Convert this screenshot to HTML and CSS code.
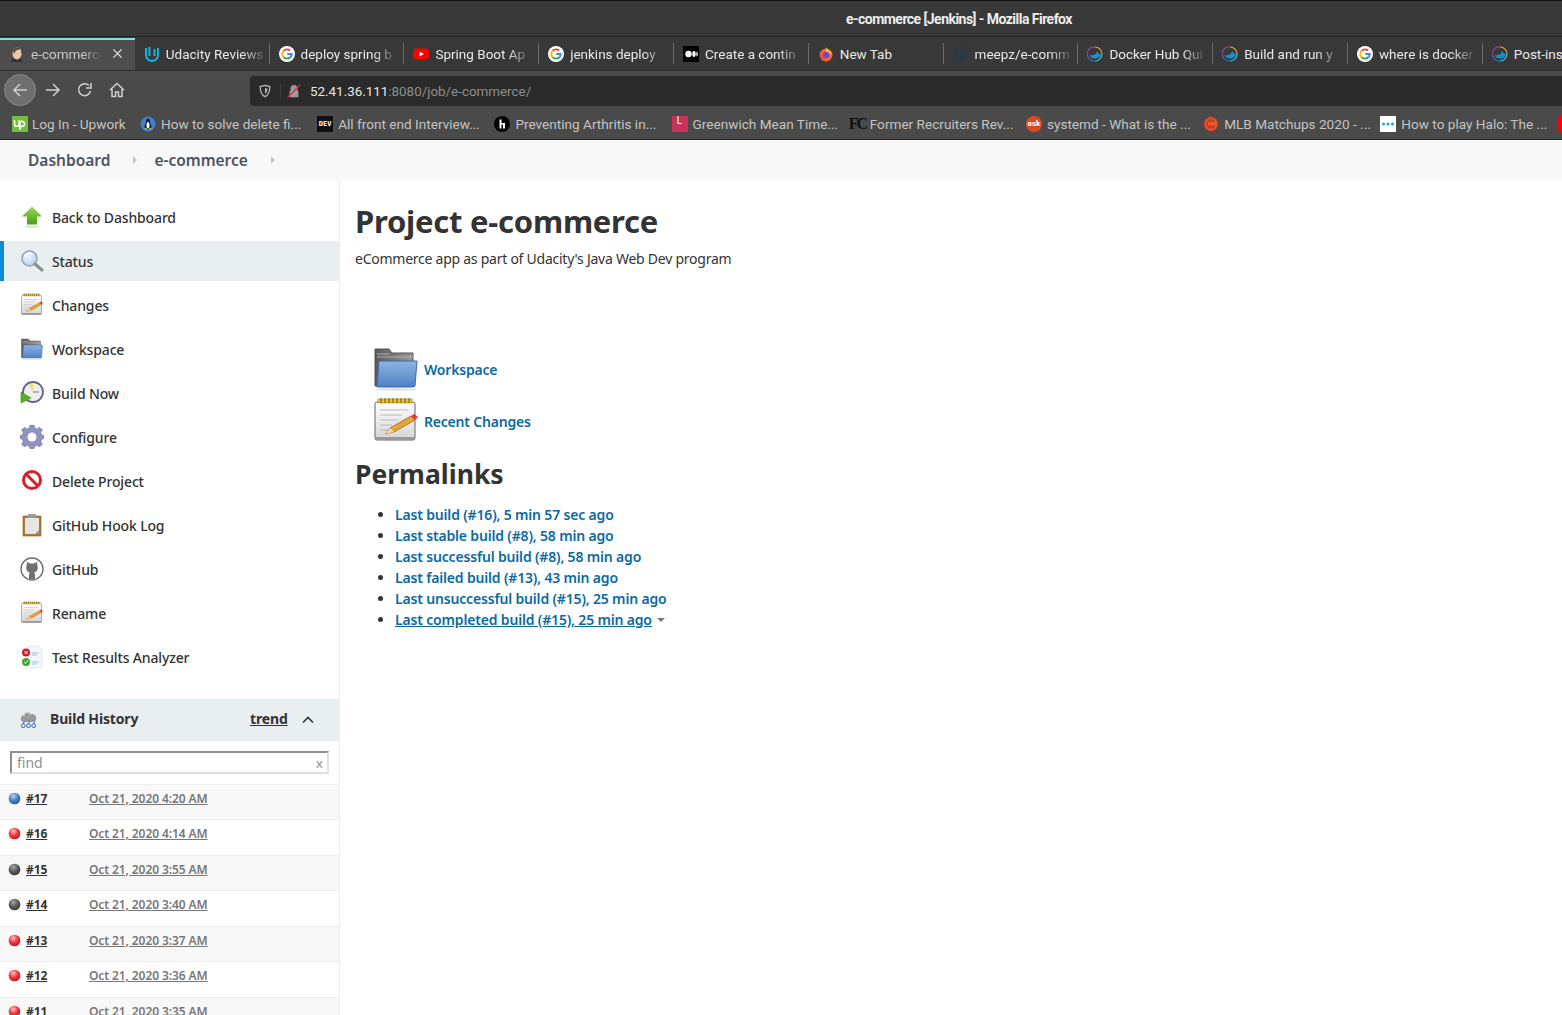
FILE: index.html
```html
<!DOCTYPE html>
<html lang="en">
<head>
    <meta charset="UTF-8">
    <title>e-commerce [Jenkins]</title>
    <link rel="stylesheet" href="styles.css">
</head>
<body>
    <!-- shared icons -->
    <svg class="defs" width="0" height="0">
        <defs>
            <linearGradient id="folderBlue" x1="0" y1="0" x2="0" y2="1"><stop offset="0" stop-color="#8db4e4"/><stop offset="1" stop-color="#4f82c4"/></linearGradient>
            <linearGradient id="folderGrey" x1="0" y1="0" x2="1" y2="0"><stop offset="0" stop-color="#5a5a5a"/><stop offset="1" stop-color="#9a9a9a"/></linearGradient>
            <linearGradient id="paper" x1="0" y1="0" x2="0" y2="1"><stop offset="0" stop-color="#ffffff"/><stop offset="1" stop-color="#d5d5d5"/></linearGradient>
            <linearGradient id="arrowGreen" x1="0" y1="0" x2="0" y2="1"><stop offset="0" stop-color="#9adb5c"/><stop offset="1" stop-color="#4c9e12"/></linearGradient>
            <radialGradient id="lens" cx=".4" cy=".35" r=".8"><stop offset="0" stop-color="#f0f6fd"/><stop offset="1" stop-color="#a9c8ec"/></radialGradient>
            <radialGradient id="ballBlue" cx=".4" cy=".3" r=".8"><stop offset="0" stop-color="#b5d3f5"/><stop offset=".5" stop-color="#4a80c4"/><stop offset="1" stop-color="#1f4f94"/></radialGradient>
            <radialGradient id="ballRed" cx=".4" cy=".3" r=".8"><stop offset="0" stop-color="#ffc0c0"/><stop offset=".5" stop-color="#f0333c"/><stop offset="1" stop-color="#b5101c"/></radialGradient>
            <radialGradient id="ballGrey" cx=".4" cy=".3" r=".8"><stop offset="0" stop-color="#a8a8a8"/><stop offset=".5" stop-color="#5a5a5a"/><stop offset="1" stop-color="#333"/></radialGradient>
            <symbol id="g-logo" viewBox="0 0 16 16">
                <circle cx="8" cy="8" r="8" fill="#fff"/>
                <path d="M11.2 4.6A4.7 4.7 0 0 0 4.6 4.9" fill="none" stroke="#ea4335" stroke-width="2"/>
                <path d="M4.6 4.9A4.7 4.7 0 0 0 4.6 11.1" fill="none" stroke="#fbbc05" stroke-width="2"/>
                <path d="M4.6 11.1A4.7 4.7 0 0 0 11.6 11" fill="none" stroke="#34a853" stroke-width="2"/>
                <path d="M11.6 11A4.7 4.7 0 0 0 12.7 8H8.2" fill="none" stroke="#4285f4" stroke-width="2"/>
            </symbol>
            <symbol id="docker" viewBox="0 0 16 16">
                <path d="M2 12.5A7 7 0 0 1 8 1" fill="none" stroke="#7a4fa0" stroke-width="1.2"/>
                <path d="M8 1A7 7 0 0 1 15 8" fill="none" stroke="#f0a23c" stroke-width="1.2"/>
                <path d="M15 8A7 7 0 0 1 8 15" fill="none" stroke="#3ec0d8" stroke-width="1.2"/>
                <path d="M8 15A7 7 0 0 1 2 12.5" fill="none" stroke="#2b6a9c" stroke-width="1.2"/>
                <path d="M2.5 9c2.5.6 5 0 6.5-1.5L10.500 5l1 2.500 2.500.5c-.6 2.800-3 4.500-5.500 4.500-3 0-5-1-6-3.500z" fill="#1a8fd0"/>
            </symbol>
            <symbol id="notepad" viewBox="0 0 48 48">
                <rect x="3" y="5" width="40" height="38" rx="2" fill="url(#paper)" stroke="#666"/>
                <rect x="4" y="40" width="38" height="3" fill="#999"/>
                <rect x="6" y="2" width="34" height="4" fill="#e3c53a" stroke="#a8891f" stroke-width=".6"/>
                <path d="M9 1v5M13 1v5M17 1v5M21 1v5M25 1v5M29 1v5M33 1v5M37 1v5" stroke="#6e5a10"/>
                <path d="M8 13h28M8 18h22M8 23h18M8 28h12M8 33h8" stroke="#bbb"/>
                <path d="M13 37l5-6 21-12 4 4-21 12z" fill="#e8a33a" stroke="#9c6714" stroke-width=".8"/>
                <path d="M13 37l5-6 4 4z" fill="#f3d9a8"/>
                <path d="M39 19l3-2 4 3-3 3z" fill="#e03a3a"/>
            </symbol>
            <symbol id="folder" viewBox="0 0 48 48">
                <path d="M3 4h14l3 4h21v33H3z" fill="url(#folderGrey)" stroke="#555"/>
                <path d="M5 12h36M5 9h12" stroke="#b0b0b0"/>
                <path d="M7 16h38l-2 25a2 2 0 0 1-2 1H5z" fill="url(#folderBlue)" stroke="#3b6ba8"/>
                <ellipse cx="24" cy="44.500" rx="21" ry="1.200" fill="#ddd"/>
            </symbol>
            <symbol id="ball-blue" viewBox="0 0 14 14"><circle cx="7" cy="7" r="6.300" fill="url(#ballBlue)"/></symbol>
            <symbol id="ball-red" viewBox="0 0 14 14"><circle cx="7" cy="7" r="6.300" fill="url(#ballRed)"/></symbol>
            <symbol id="ball-grey" viewBox="0 0 14 14"><circle cx="7" cy="7" r="6.300" fill="url(#ballGrey)"/></symbol>
        </defs>
    </svg>

    <div class="page">
        <div class="titlebar">e-commerce [Jenkins] - Mozilla Firefox</div>

        <div class="tabs">
            <div class="tab tab-active">
                <svg class="fav" viewBox="0 0 16 16"><path d="M4 5c0-4 7-5 8-1l.5 5-1.500 3 2 3H3l2-3-1.500-3z" fill="#ecc9a8"/><path d="M4 5c0-4 7-5 8-1-2-1-5 0-6 2l-.5 2z" fill="#5a4a42"/><path d="M2 16l2-4 4 1.500 4-1.500 2 4z" fill="#2f2f35"/><path d="M7 13h2.500l-1 2.500z" fill="#c0392b"/></svg>
                <span class="tab-label">e-commerce</span>
                <svg class="tab-close" viewBox="0 0 12 12"><path d="M1.500 1.500l9 9M10.500 1.500l-9 9" stroke="#e0e0e0" stroke-width="1.500"/></svg>
            </div>
            <div class="tab">
                <svg class="fav" viewBox="0 0 16 16"><path d="M2 2v7a6 6 0 0 0 12 0V2M5.500 1v9" fill="none" stroke="#16b2dc" stroke-width="2"/><path d="M10.500 3v7" stroke="#16b2dc" stroke-width="2"/></svg>
                <span class="tab-label">Udacity Reviews</span>
            </div>
            <div class="tab">
                <svg class="fav"><use href="#g-logo"/></svg>
                <span class="tab-label">deploy spring b</span>
            </div>
            <div class="tab">
                <svg class="fav" viewBox="0 0 16 16"><rect x="0" y="2.500" width="16" height="11" rx="3" fill="#f00"/><path d="M6.500 5.500v5l4.500-2.500z" fill="#fff"/></svg>
                <span class="tab-label">Spring Boot Ap</span>
            </div>
            <div class="tab">
                <svg class="fav"><use href="#g-logo"/></svg>
                <span class="tab-label">jenkins deploy</span>
            </div>
            <div class="tab">
                <svg class="fav" viewBox="0 0 16 16"><rect width="16" height="16" fill="#000"/><circle cx="5.500" cy="8" r="3.200" fill="#fff"/><ellipse cx="11" cy="8" rx="1.700" ry="3" fill="#fff"/><ellipse cx="14" cy="8" rx=".7" ry="2.600" fill="#fff"/></svg>
                <span class="tab-label">Create a contin</span>
            </div>
            <div class="tab">
                <svg class="fav" viewBox="0 0 16 16"><circle cx="8" cy="9" r="6.500" fill="#f2682a"/><path d="M8 1c1 3 5 3 6 8-1-1-3-2-6-2z" fill="#ffb52e"/><circle cx="8" cy="9" r="3.200" fill="#7b3fd0"/><path d="M2 5c0 3 1 7 6 9-4 0-7-3-6-9z" fill="#e22850"/></svg>
                <span class="tab-label tab-label-full">New Tab</span>
            </div>
            <div class="tab">
                <svg class="fav" viewBox="0 0 16 16"><circle cx="8" cy="8" r="7" fill="none" stroke="#243a4c" stroke-width="1.200"/><path d="M3 9c3 1 6 0 7-3l1 2 2 .5c-1 3-3 4-5 4-3 0-4-1-5-3.500z" fill="#1c3a52"/></svg>
                <span class="tab-label">meepz/e-comm</span>
            </div>
            <div class="tab">
                <svg class="fav"><use href="#docker"/></svg>
                <span class="tab-label">Docker Hub Qui</span>
            </div>
            <div class="tab">
                <svg class="fav"><use href="#docker"/></svg>
                <span class="tab-label">Build and run y</span>
            </div>
            <div class="tab">
                <svg class="fav"><use href="#g-logo"/></svg>
                <span class="tab-label">where is docker</span>
            </div>
            <div class="tab tab-last">
                <svg class="fav"><use href="#docker"/></svg>
                <span>Post-ins</span>
            </div>
        </div>

        <div class="navbar">
            <div class="nav-buttons">
                <div class="nav-back">
                    <svg viewBox="0 0 16 16"><path d="M15 8H2M8 2L2 8l6 6" fill="none" stroke="#cfcfcf" stroke-width="1.500"/></svg>
                </div>
                <svg class="nav-icon" viewBox="0 0 16 16"><path d="M1 8h13M8 2l6 6-6 6" fill="none" stroke="#cfcfcf" stroke-width="1.500"/></svg>
                <svg class="nav-icon" viewBox="0 0 16 16"><path d="M13.500 9A6 6 0 1 1 12 3.500" fill="none" stroke="#cfcfcf" stroke-width="1.500"/><path d="M14 1v5H9" fill="none" stroke="#cfcfcf" stroke-width="1.500"/></svg>
                <svg class="nav-icon" viewBox="0 0 16 16"><path d="M1 8l7-6.500L15 8M3 7v7.500h3.500V10h3v4.500H13V7" fill="none" stroke="#cfcfcf" stroke-width="1.500"/></svg>
            </div>
            <div class="urlbar">
                <svg class="url-shield" viewBox="0 0 16 16"><path d="M8 1.500l5.500 1.500c0 5-1 9-5.500 11.500C3.500 12 2.500 8 2.500 3z" fill="none" stroke="#b5b5b5" stroke-width="1.500"/><path d="M8 4.500v7c2-1.500 2.700-4 2.800-6z" fill="#b5b5b5"/></svg>
                <svg class="url-lock" viewBox="0 0 16 16"><path d="M4 8V5a4 4 0 0 1 8 0v3M3 8h10v7H3z" fill="#9a9a9a"/><path d="M1 15L15 1" stroke="#f0254a" stroke-width="1.600"/></svg>
                <span class="url-text"><span class="url-host">52.41.36.111</span>:8080/job/e-commerce/</span>
            </div>
        </div>

        <div class="bookmarks">
            <div class="bookmark bookmark-first">
                <svg class="fav" viewBox="0 0 16 16"><rect width="16" height="16" fill="#6fbf3a"/><path d="M2.500 4v4a2.300 2.300 0 0 0 4.600 0V4M7 7c1-2 5-2.500 5.500 .5S9 11.500 8 9M8 7v7" fill="none" stroke="#fff" stroke-width="1.600"/></svg>
                <span>Log In - Upwork</span>
            </div>
            <div class="bookmark">
                <svg class="fav" viewBox="0 0 16 16"><circle cx="8" cy="8" r="7.500" fill="#3f7fd0"/><path d="M8 2.500c2 0 2 2 2 4l2 5-3 1H7l-3-1 2-5c0-2 0-4 2-4z" fill="#222"/><path d="M8 6c1 0 1.500 2 1.500 4S8.500 12 8 12s-1.500 0-1.500-2S7 6 8 6z" fill="#fff"/><path d="M4 11.500l3 1-1 1.500zM12 11.500l-3 1 1 1.500z" fill="#f0b030"/></svg>
                <span>How to solve delete fi...</span>
            </div>
            <div class="bookmark">
                <span class="fav fav-dev">DEV</span>
                <span>All front end Interview...</span>
            </div>
            <div class="bookmark">
                <svg class="fav" viewBox="0 0 16 16"><circle cx="8" cy="8" r="8" fill="#000"/><path d="M5.500 3.500v9h2v-4h1.500v4h2V7H7.500V3.500z" fill="#fff"/></svg>
                <span>Preventing Arthritis in...</span>
            </div>
            <div class="bookmark">
                <span class="fav fav-l">L</span>
                <span>Greenwich Mean Time...</span>
            </div>
            <div class="bookmark">
                <span class="fav fav-fc">FC</span>
                <span>Former Recruiters Rev...</span>
            </div>
            <div class="bookmark">
                <span class="fav fav-ask">ask</span>
                <span>systemd - What is the ...</span>
            </div>
            <div class="bookmark">
                <svg class="fav" viewBox="0 0 16 16"><circle cx="8" cy="8" r="7.500" fill="#b5432a"/><circle cx="8" cy="8" r="5.500" fill="none" stroke="#e8552e" stroke-width="1.500"/><path d="M5 6h8v3.500H5z" fill="#f0552a"/></svg>
                <span>MLB Matchups 2020 - ...</span>
            </div>
            <div class="bookmark">
                <svg class="fav" viewBox="0 0 16 16"><rect width="16" height="16" fill="#fff"/><circle cx="3.500" cy="8" r="1.500" fill="#14a9e0"/><circle cx="8" cy="8" r="1.500" fill="#14a9e0"/><circle cx="12.500" cy="8" r="1.500" fill="#14a9e0"/></svg>
                <span>How to play Halo: The ...</span>
            </div>
            <div class="bookmark">
                <svg class="fav" viewBox="0 0 16 16"><rect width="16" height="16" rx="3" fill="#f00"/></svg>
            </div>
        </div>

        <div class="breadcrumb">
            <a class="crumb crumb-first">Dashboard</a>
            <span class="crumb-arrow"></span>
            <a class="crumb">e-commerce</a>
            <span class="crumb-arrow"></span>
        </div>

        <div class="content">
            <div class="side-panel">
                <div class="tasks">
                    <div class="task">
                        <svg class="task-icon" viewBox="0 0 24 24"><path d="M12 1.500l10 10h-5v8H7v-8H2z" fill="url(#arrowGreen)"/><ellipse cx="12" cy="21.500" rx="7" ry="1" fill="#ddd"/></svg>
                        <span>Back to Dashboard</span>
                    </div>
                    <div class="task task-active">
                        <svg class="task-icon" viewBox="0 0 24 24"><circle cx="9.500" cy="9.500" r="7.500" fill="url(#lens)" stroke="#9aa5b0" stroke-width="1.600"/><path d="M4.500 8a5 5 0 0 1 8-2.500" fill="none" stroke="#fff" stroke-width="1.500"/><path d="M15 15l7 6" stroke="#8c8c8c" stroke-width="3" stroke-linecap="round"/></svg>
                        <span>Status</span>
                    </div>
                    <div class="task">
                        <svg class="task-icon"><use href="#notepad"/></svg>
                        <span>Changes</span>
                    </div>
                    <div class="task">
                        <svg class="task-icon"><use href="#folder"/></svg>
                        <span>Workspace</span>
                    </div>
                    <div class="task">
                        <svg class="task-icon" viewBox="0 0 24 24"><circle cx="13" cy="11" r="10" fill="#eee" stroke="#6a6585" stroke-width="1.800"/><path d="M13 11L9 4a8 8 0 0 1 4-1z" fill="#f0d878"/><path d="M13 11l6 0" stroke="#777"/><path d="M1 11v11l10-5z" fill="#52b520" stroke="#3a8c14" stroke-width=".6"/></svg>
                        <span>Build Now</span>
                    </div>
                    <div class="task">
                        <svg class="task-icon" viewBox="0 0 24 24"><path d="M10 1h4l.6 3 2.500 1 2.500-1.700 2.800 2.800L20.700 8.600l1 2.400 2.300.6v3l-2.300.6-1 2.400 1.700 2.500-2.800 2.800-2.500-1.700-2.500 1-.6 2.300h-4l-.6-2.300-2.500-1-2.500 1.700-2.800-2.800 1.700-2.500-1-2.400L0 14.600v-3l2.300-.6 1-2.400L1.600 6.100l2.800-2.800L6.900 5l2.500-1z" transform="translate(0 -1)" fill="#8f93c0" stroke="#6a6d9c" stroke-width=".6"/><circle cx="12" cy="12" r="4.500" fill="#fff"/></svg>
                        <span>Configure</span>
                    </div>
                    <div class="task">
                        <svg class="task-icon" viewBox="0 0 24 24"><circle cx="12" cy="11" r="8.500" fill="#fff" stroke="#d4222a" stroke-width="3"/><path d="M6 5l12 12" stroke="#d4222a" stroke-width="3"/></svg>
                        <span>Delete Project</span>
                    </div>
                    <div class="task">
                        <svg class="task-icon" viewBox="0 0 24 24"><rect x="3" y="3" width="18" height="20" fill="#b07a35" stroke="#8a5c22" stroke-width=".6"/><rect x="5" y="5" width="14" height="16" fill="#e6e6e6"/><rect x="8" y="1" width="8" height="4" rx="1" fill="#999"/><path d="M15 21l4-4v4z" fill="#999"/></svg>
                        <span>GitHub Hook Log</span>
                    </div>
                    <div class="task">
                        <svg class="task-icon" viewBox="0 0 24 24"><circle cx="12" cy="12" r="11" fill="#fff" stroke="#707070" stroke-width="1.400"/><path d="M7 5l3 1.500h4L17 5l.5 4c1 3-.5 6-3.500 6.500.7.500 1 1.200 1 2v4.500H9v-4.500c0-.8.300-1.500 1-2C7 15 5.500 12 6.500 9z" fill="#707070"/></svg>
                        <span>GitHub</span>
                    </div>
                    <div class="task">
                        <svg class="task-icon"><use href="#notepad"/></svg>
                        <span>Rename</span>
                    </div>
                    <div class="task">
                        <svg class="task-icon" viewBox="0 0 24 24"><path d="M8 1h10l4 4v18H8z" fill="#f4f7fb" stroke="#d5dbe2" stroke-width=".6"/><path d="M12 8h7M12 10h5M12 17h7M12 19h5" stroke="#9cc0e0"/><circle cx="6" cy="7.500" r="4" fill="#c8202c"/><path d="M4.500 6l3 3M7.500 6l-3 3" stroke="#fff"/><circle cx="6" cy="17" r="4" fill="#3cab2c"/><path d="M4 17l1.500 1.500L8 15.500" fill="none" stroke="#fff"/></svg>
                        <span>Test Results Analyzer</span>
                    </div>
                </div>

                <div class="history-head">
                    <svg class="history-icon" viewBox="0 0 18 18"><path d="M4 10a3 3 0 0 1 .5-6A4 4 0 0 1 12 3a3.500 3.500 0 0 1 2 7z" fill="#9a9a9a" stroke="#707070" stroke-width=".6"/><path d="M4 4.500a3.500 3.500 0 0 1 7-1" fill="none" stroke="#ddd"/><g fill="none" stroke="#2a5ca8" stroke-width="1"><circle cx="3.500" cy="14.500" r="2"/><circle cx="9" cy="14.500" r="2"/><circle cx="14.500" cy="14.500" r="2"/><path d="M4.500 10l-1 2.500M10 10l-1 2.500M15.500 10l-1 2.500"/></g></svg>
                    <span class="history-title">Build History</span>
                    <a class="history-trend">trend</a>
                    <svg class="history-chevron" viewBox="0 0 12 8"><path d="M1 6.500l5-5 5 5" fill="none" stroke="#333" stroke-width="1.600"/></svg>
                </div>

                <div class="history-search">
                    <div class="search-box">
                        <span class="search-hint">find</span>
                        <span class="search-clear">x</span>
                    </div>
                </div>

                <div class="build-row build-odd">
                    <svg class="ball"><use href="#ball-blue"/></svg><a class="build-num">#17</a><a class="build-date">Oct 21, 2020 4:20 AM</a>
                </div>
                <div class="build-row">
                    <svg class="ball"><use href="#ball-red"/></svg><a class="build-num">#16</a><a class="build-date">Oct 21, 2020 4:14 AM</a>
                </div>
                <div class="build-row build-odd">
                    <svg class="ball"><use href="#ball-grey"/></svg><a class="build-num">#15</a><a class="build-date">Oct 21, 2020 3:55 AM</a>
                </div>
                <div class="build-row">
                    <svg class="ball"><use href="#ball-grey"/></svg><a class="build-num">#14</a><a class="build-date">Oct 21, 2020 3:40 AM</a>
                </div>
                <div class="build-row build-odd">
                    <svg class="ball"><use href="#ball-red"/></svg><a class="build-num">#13</a><a class="build-date">Oct 21, 2020 3:37 AM</a>
                </div>
                <div class="build-row">
                    <svg class="ball"><use href="#ball-red"/></svg><a class="build-num">#12</a><a class="build-date">Oct 21, 2020 3:36 AM</a>
                </div>
                <div class="build-row build-odd">
                    <svg class="ball"><use href="#ball-red"/></svg><a class="build-num">#11</a><a class="build-date">Oct 21, 2020 3:35 AM</a>
                </div>
            </div>

            <div class="main-panel">
                <h1>Project e-commerce</h1>
                <p class="description">eCommerce app as part of Udacity's Java Web Dev program</p>

                <div class="main-links">
                    <div class="main-link">
                        <svg class="main-icon"><use href="#folder"/></svg>
                        <a>Workspace</a>
                    </div>
                    <div class="main-link">
                        <svg class="main-icon"><use href="#notepad"/></svg>
                        <a>Recent Changes</a>
                    </div>
                </div>

                <h2>Permalinks</h2>
                <ul class="permalinks">
                    <li><a>Last build (#16), 5 min 57 sec ago</a></li>
                    <li><a>Last stable build (#8), 58 min ago</a></li>
                    <li><a>Last successful build (#8), 58 min ago</a></li>
                    <li><a>Last failed build (#13), 43 min ago</a></li>
                    <li><a>Last unsuccessful build (#15), 25 min ago</a></li>
                    <li><a class="link-hover">Last completed build (#15), 25 min ago</a><span class="menu-arrow"></span></li>
                </ul>
            </div>
        </div>
    </div>
</body>
</html>
```

FILE: styles.css
```css
html, body {
    margin: 0;
    padding: 0;
    background-color: #fff;
}

.defs {
    position: absolute;
}

.page {
    width: 1562px;
    height: 1015px;
    overflow: hidden;
    display: flex;
    flex-direction: column;
    font-family: "Noto Sans", sans-serif;
    color: #333;
}

.fav {
    width: 16px;
    height: 16px;
    flex: none;
}

/* Browser chrome */
.titlebar {
    height: 37px;
    flex: none;
    box-sizing: border-box;
    border-top: 1px solid #111;
    border-bottom: 1px solid #222;
    background-color: #383838;
    color: #eee;
    font-family: Roboto, sans-serif;
    font-size: 14px;
    font-weight: 700;
    letter-spacing: -.53px;
    line-height: 36px;
    padding-left: 846px;
    white-space: nowrap;
}

.tabs {
    height: 34px;
    flex: none;
    display: flex;
    background-color: #383838;
    border-bottom: 1px solid #2a2a2a;
    box-sizing: border-box;
    font-family: Roboto, sans-serif;
    font-size: 13.500px;
    color: #e8e8e8;
}

.tab {
    width: 134.800px;
    flex: none;
    box-sizing: border-box;
    display: flex;
    align-items: center;
    gap: 6px;
    padding: 0 0 0 9px;
    position: relative;
    white-space: nowrap;
}

.tab::after {
    content: "";
    position: absolute;
    right: 0;
    top: 6px;
    bottom: 6px;
    width: 1px;
    background-color: #6a6a6a;
}

.tab-label {
    flex: 1;
    padding-right: 10px;
    -webkit-mask-image: linear-gradient(to right, #000 70%, transparent 95%);
    mask-image: linear-gradient(to right, #000 70%, transparent 95%);
}

.tab-label-full {
    -webkit-mask-image: none;
    mask-image: none;
}

.tab-active {
    background-color: #4d4d4d;
    border-top: 2px solid #7fe3e3;
    margin-top: 1px;
    padding-bottom: 3px;
    color: #c8c8c8;
}

.tab-active .tab-label {
    flex: none;
    width: 75px;
    padding-right: 0;
}

.tab-active::after,
.tab-last::after {
    display: none;
}

.tab-last {
    width: 79px;
}

.tab-close {
    width: 11px;
    height: 11px;
    flex: none;
}

.navbar {
    height: 35px;
    flex: none;
    display: flex;
    background-color: #4a4a4a;
    border-top: 2px solid #4f4f4f;
    box-sizing: border-box;
}

.nav-buttons {
    width: 250px;
    flex: none;
    display: flex;
    align-items: center;
    padding-left: 4px;
    box-sizing: border-box;
}

.nav-back {
    width: 32px;
    height: 32px;
    box-sizing: border-box;
    border-radius: 50%;
    background-color: #6f6f6f;
    border: 1px solid #8a8a8a;
    display: flex;
    align-items: center;
    justify-content: center;
    margin-right: 9px;
}

.nav-back svg {
    width: 16px;
    height: 16px;
}

.nav-icon {
    width: 16px;
    height: 16px;
    margin-right: 16px;
}

.urlbar {
    flex: 1;
    display: flex;
    align-items: center;
    background-color: #2a2a2a;
    border-radius: 4px 0 0 4px;
    margin-top: 3px;
    font-family: Roboto, sans-serif;
    font-size: 13.400px;
    color: #8f8f8f;
}

.url-shield {
    width: 14px;
    height: 14px;
    margin-left: 8px;
    padding-right: 8px;
    border-right: 1px solid #3d3d3d;
}

.url-lock {
    width: 14px;
    height: 14px;
    margin-left: 6px;
}

.url-text {
    margin-left: 9px;
}

.url-host {
    color: #e8e8e8;
}

.bookmarks {
    height: 34px;
    flex: none;
    display: flex;
    align-items: center;
    background-color: #4a4a4a;
    border-bottom: 1px solid #222;
    box-sizing: border-box;
    padding: 2px 0 0 12px;
    font-family: Roboto, sans-serif;
    font-size: 13.600px;
    color: #c4c4c4;
    white-space: nowrap;
}

.bookmark {
    width: 177.200px;
    flex: none;
    display: flex;
    align-items: center;
    gap: 5px;
}

.bookmark-first {
    width: 128px;
    gap: 4px;
}

.fav-dev {
    background-color: #111;
    color: #fff;
    font-family: "DejaVu Sans Mono", monospace;
    font-size: 7px;
    font-weight: 700;
    line-height: 16px;
    text-align: center;
}

.fav-l {
    background-color: #c9325a;
    color: #fff;
    font-size: 10px;
    line-height: 10px;
    text-align: center;
}

.fav-fc {
    color: #111;
    font-family: "Liberation Serif", serif;
    font-size: 16px;
    font-weight: 700;
    line-height: 16px;
    letter-spacing: -2px;
}

.fav-ask {
    background-color: #e0491f;
    border-radius: 50%;
    color: #fff;
    font-size: 8px;
    font-weight: 700;
    line-height: 15px;
    text-align: center;
}

/* Breadcrumb */
.breadcrumb {
    height: 40px;
    flex: none;
    box-sizing: border-box;
    display: flex;
    align-items: center;
    background-color: #f8f8f8;
    padding-left: 28px;
    font-size: 15.500px;
    font-weight: 600;
    color: #4d545d;
}

.crumb-arrow {
    width: 0;
    height: 0;
    border-top: 4px solid transparent;
    border-bottom: 4px solid transparent;
    border-left: 4px solid #c4c4c4;
    margin: 0 17px 0 23px;
}

/* Content */
.content {
    flex: 1;
    display: flex;
    min-height: 0;
}

.side-panel {
    width: 340px;
    flex: none;
    box-sizing: border-box;
    border-right: 1px solid #e9eef1;
}

.tasks {
    padding-top: 17px;
    padding-bottom: 22px;
}

.task {
    height: 40px;
    margin-bottom: 4px;
    display: flex;
    align-items: center;
    padding-left: 20px;
    font-size: 14px;
    font-weight: 500;
    letter-spacing: -.15px;
    color: #333;
}

.task:last-child {
    margin-bottom: 0;
}

.task-active {
    background-color: #e9eef1;
    border-left: 4px solid #0b8bd5;
    padding-left: 16px;
}

.task-icon {
    width: 24px;
    height: 24px;
    flex: none;
    margin-right: 8px;
}

.history-head {
    height: 42px;
    display: flex;
    align-items: center;
    background-color: #e9eef1;
    font-size: 14px;
    letter-spacing: -.15px;
    padding-left: 20px;
}

.history-icon {
    width: 17px;
    height: 17px;
    margin-right: 13px;
}

.history-title {
    width: 200px;
    font-weight: 700;
    margin-bottom: 3px;
}

.history-trend {
    font-weight: 700;
    text-decoration: underline;
    margin-bottom: 3px;
}

.history-chevron {
    width: 12px;
    height: 8px;
    margin-left: 14px;
}

.history-search {
    height: 42.500px;
    box-sizing: border-box;
    padding: 10px 10px 0;
}

.search-box {
    height: 23px;
    width: 319px;
    box-sizing: border-box;
    border: 2px solid;
    border-color: #8f8f8f #e0e0e0 #e0e0e0 #8f8f8f;
    display: flex;
    justify-content: space-between;
    align-items: center;
    padding: 0 4px 0 5px;
    font-size: 14px;
    color: #8f8f8f;
}

.search-clear {
    font-size: 13px;
}

.build-row {
    height: 35.500px;
    box-sizing: border-box;
    border-top: 1px solid #eceff1;
    display: flex;
    align-items: flex-start;
    padding: 5px 0 0 8px;
    font-size: 12px;
    font-weight: 600;
    letter-spacing: -.1px;
    background-color: #fff;
}

.build-odd {
    background-color: #f8f8f8;
}

.ball {
    width: 13px;
    height: 13px;
    flex: none;
    margin: 2px 5px 0 0;
}

.build-num {
    width: 63px;
    font-weight: 700;
    text-decoration: underline;
    color: #333;
}

.build-date {
    color: #777;
    text-decoration: underline;
}

.main-panel {
    flex: 1;
    padding: 19px 0 0 15px;
}

h1 {
    margin: 0;
    font-size: 31px;
    font-weight: 700;
    letter-spacing: -.25px;
    line-height: 44px;
    color: #333;
}

.description {
    margin: 6px 0 0;
    font-size: 14px;
    letter-spacing: -.25px;
    line-height: 20px;
    font-weight: 400;
}

.main-links {
    margin-top: 74px;
    padding-left: 17px;
}

.main-link {
    height: 52px;
    display: flex;
    align-items: center;
    gap: 4px;
    font-size: 14px;
    font-weight: 600;
    letter-spacing: -.2px;
    color: #0b6aa2;
}

.main-icon {
    width: 48px;
    height: 48px;
    flex: none;
}

h2 {
    margin: 7px 0 0;
    font-size: 26.500px;
    font-weight: 700;
    line-height: 40px;
    color: #333;
}

.permalinks {
    margin: 10px 0 0;
    padding-left: 40px;
    list-style: disc;
    font-size: 14px;
    letter-spacing: -.17px;
    line-height: 21px;
    font-weight: 600;
    color: #0b6aa2;
}

.permalinks li::marker {
    color: #333;
}

.link-hover {
    text-decoration: underline;
}

.menu-arrow {
    display: inline-block;
    width: 0;
    height: 0;
    margin-left: 5px;
    vertical-align: 3px;
    border-left: 4px solid transparent;
    border-right: 4px solid transparent;
    border-top: 4px solid #777;
}
```
